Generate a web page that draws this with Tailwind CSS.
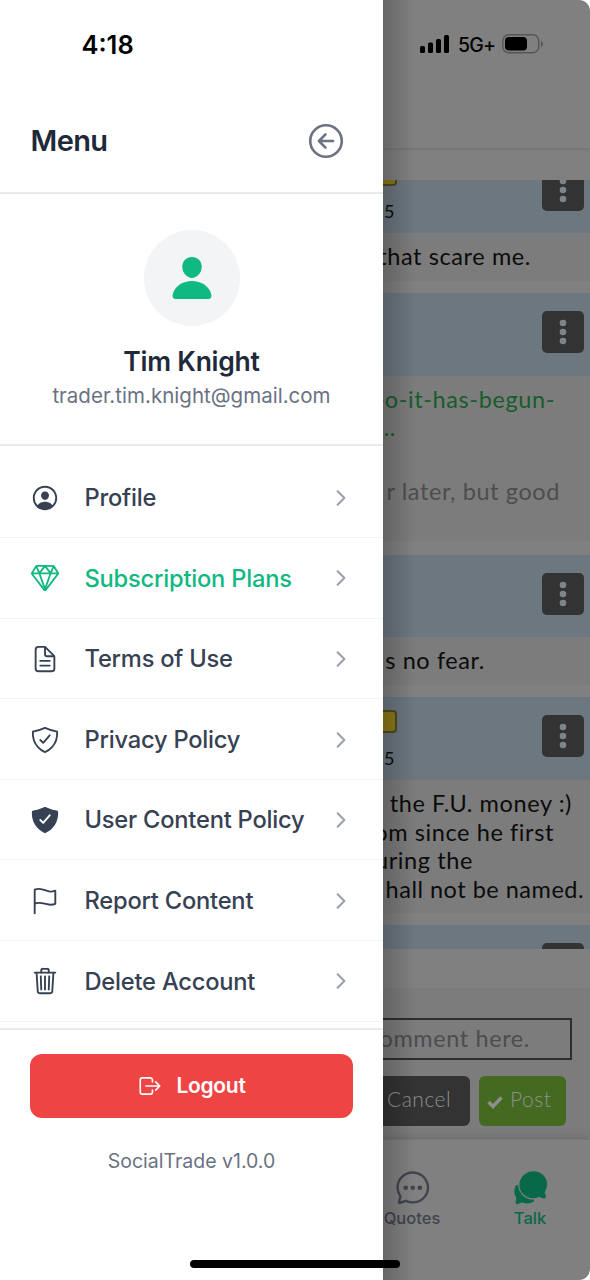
<!DOCTYPE html>
<html lang="en">
<head>
<meta charset="utf-8">
<title>SocialTrade</title>
<script src="https://cdn.jsdelivr.net/npm/@tailwindcss/browser@4"></script>
</head>
<body class="bg-white">
<svg class="hidden">
  <symbol id="chev" viewBox="0 0 512 512"><path d="M184 112l144 144-144 144" fill="none" stroke="currentColor" stroke-width="44" stroke-linecap="round" stroke-linejoin="round"/></symbol>
  <symbol id="dots" viewBox="0 0 42 42"><circle cx="21" cy="12" r="3.3"/><circle cx="21" cy="21" r="3.3"/><circle cx="21" cy="30" r="3.3"/></symbol>
</svg>
<div class="relative flex w-[590px] h-[1280px] overflow-hidden font-['Inter',sans-serif]">

  <!-- Drawer -->
  <aside class="w-[383px] h-full shrink-0 bg-white flex flex-col">
    <div class="h-[88px] pl-[81.5px] pt-[30px] text-[25.5px] leading-[30px] font-semibold text-black tracking-[0px]">4:18</div>
    <div class="h-[106px] border-b-2 border-[#e9eaec] flex items-center justify-between pt-[1.5px] pl-[30.5px] pr-[36px]">
      <h1 class="pt-[1px] text-[29px] leading-[36px] font-semibold text-gray-800 tracking-[-0.6px]">Menu</h1>
      <svg class="size-[42px]" viewBox="0 0 512 512" fill="none" stroke="#6b7280" stroke-width="32" stroke-linecap="round" stroke-linejoin="round"><path d="M249.38 336L170 256l79.38-80M181.03 256H342"/><path d="M448 256c0-106-86-192-192-192S64 150 64 256s86 192 192 192 192-86 192-192z"/></svg>
    </div>
    <div class="h-[252px] border-b-2 border-[#e9eaec] flex flex-col items-center pt-[36px]">
      <div class="size-[96px] rounded-full bg-gray-100 flex items-center justify-center">
        <svg class="size-[48px]" viewBox="0 0 512 512" fill="#10b981"><path d="M332.64 64.58C313.18 43.57 286 32 256 32c-30.16 0-57.43 11.5-76.8 32.38-19.58 21.11-29.12 49.8-26.88 80.78C156.76 206.28 203.27 256 256 256s99.16-49.71 103.67-110.82c2.27-30.7-7.33-59.33-27.03-80.6zM432 480H80a31 31 0 01-24.2-11.13c-6.5-7.77-9.12-18.38-7.18-29.11C57.06 392.94 83.4 353.61 124.8 326c36.78-24.51 83.37-38 131.2-38s94.42 13.5 131.2 38c41.4 27.6 67.74 66.93 76.18 113.75 1.94 10.73-.68 21.34-7.18 29.11A31 31 0 01432 480z"/></svg>
      </div>
      <div class="mt-[19px] text-[26.5px] leading-[32px] font-semibold text-gray-800 tracking-[-0.25px]">Tim Knight</div>
      <div class="mt-[5.5px] text-[20.5px] leading-[26px] text-gray-500 tracking-[0.02px]">trader.tim.knight@gmail.com</div>
    </div>
    <nav class="h-[582px] pt-[11.5px] text-gray-700 text-[23.7px] font-medium tracking-[-0.22px] overflow-hidden">
      <div class="h-[80.6px] border-b-[1.5px] border-gray-100 flex items-center pt-[1px] pl-[30px] pr-[30px]">
        <svg class="size-[30px] mr-[24.5px]" viewBox="0 0 512 512" fill="currentColor"><path d="M258.9 48C141.92 46.42 46.42 141.92 48 258.9c1.56 112.19 92.91 203.54 205.1 205.1 117 1.6 212.48-93.9 210.88-210.88C462.44 140.91 371.09 49.56 258.9 48zm126.42 327.25a4 4 0 01-6.14-.32 124.27 124.27 0 00-32.35-29.59C321.37 329 289.11 320 256 320s-65.37 9-90.83 25.34a124.24 124.24 0 00-32.35 29.58 4 4 0 01-6.14.32A175.32 175.32 0 0180 259c-1.63-97.31 78.22-178.76 175.57-179S432 158.81 432 256a175.32 175.32 0 01-46.68 119.25z"/><path d="M256 144c-19.72 0-37.55 7.39-50.22 20.82s-19 32-17.57 51.93C191.11 256 221.52 288 256 288s64.83-32 67.79-71.24c1.48-19.74-4.8-38.14-17.68-51.82C293.39 151.44 275.59 144 256 144z"/></svg>
        <span class="grow">Profile</span><svg class="size-[24px] text-gray-400"><use href="#chev"/></svg>
      </div>
      <div class="h-[80.6px] border-b-[1.5px] border-gray-100 flex items-center pt-[1px] pl-[30px] pr-[30px]">
        <svg class="size-[30px] mr-[24.5px] text-[#10b981]" viewBox="0 0 512 512" fill="none" stroke="currentColor" stroke-width="32" stroke-linecap="round" stroke-linejoin="round"><path d="M35.42 188.21l207.75 269.46a16.17 16.17 0 0025.66 0l207.75-269.46a16.52 16.52 0 00.95-18.75L407.06 55.71A16.22 16.22 0 00393.27 48H118.73a16.22 16.22 0 00-13.79 7.71L34.47 169.46a16.52 16.52 0 00.95 18.75zM48 176h416"/><path d="M400 64l-48 112-96-128M112 64l48 112 96-128M256 448l-96-272M256 448l96-272"/></svg>
        <span class="grow text-[#10b981]">Subscription Plans</span><svg class="size-[24px] text-gray-400"><use href="#chev"/></svg>
      </div>
      <div class="h-[80.6px] border-b-[1.5px] border-gray-100 flex items-center pt-[1px] pl-[30px] pr-[30px]">
        <svg class="size-[30px] mr-[24.5px]" viewBox="0 0 512 512" fill="none" stroke="currentColor" stroke-width="32" stroke-linecap="round" stroke-linejoin="round"><path d="M416 221.25V416a48 48 0 01-48 48H144a48 48 0 01-48-48V96a48 48 0 0148-48h98.75a32 32 0 0122.62 9.37l141.26 141.26a32 32 0 019.37 22.62z"/><path d="M256 56v120a32 32 0 0032 32h120M176 288h160M176 368h160"/></svg>
        <span class="grow">Terms of Use</span><svg class="size-[24px] text-gray-400"><use href="#chev"/></svg>
      </div>
      <div class="h-[80.6px] border-b-[1.5px] border-gray-100 flex items-center pt-[1px] pl-[30px] pr-[30px]">
        <svg class="size-[30px] mr-[24.5px]" viewBox="0 0 512 512" fill="none" stroke="currentColor" stroke-width="32" stroke-linecap="round" stroke-linejoin="round"><path d="M336 176L225.2 304 176 255.8"/><path d="M463.1 112.37C373.68 96.33 336.71 84.45 256 48c-80.71 36.45-117.68 48.33-207.1 64.37C32.7 369.13 240.58 457.79 256 464c15.42-6.21 223.3-94.87 207.1-351.63z"/></svg>
        <span class="grow">Privacy Policy</span><svg class="size-[24px] text-gray-400"><use href="#chev"/></svg>
      </div>
      <div class="h-[80.6px] border-b-[1.5px] border-gray-100 flex items-center pt-[1px] pl-[30px] pr-[30px]">
        <svg class="size-[30px] mr-[24.5px]" viewBox="0 0 512 512" fill="currentColor"><path d="M479.07 111.35A16 16 0 00465.92 96.6C379.89 81.18 343.69 69.12 266 34.16c-7.76-2.89-12.57-2.84-20 0-77.69 35-113.89 47-199.92 62.44a16 16 0 00-13.15 14.75c-3.85 61.1 4.34 118 24.36 169.15a348.86 348.86 0 0071.43 112.41c44.67 47.43 94.2 75.12 119.74 85.6a20 20 0 0015.11 0c27-10.92 74.69-37.82 119.71-85.62A348.86 348.86 0 00454.71 280.5c20.02-51.14 28.21-108.05 24.36-169.15zm-131 75.11l-110.8 128a16 16 0 01-11.41 5.53h-.66a16 16 0 01-11.2-4.57l-49.2-48.2a16 16 0 1122.4-22.86l37 36.29 99.7-115.13a16 16 0 0124.2 20.94z"/></svg>
        <span class="grow">User Content Policy</span><svg class="size-[24px] text-gray-400"><use href="#chev"/></svg>
      </div>
      <div class="h-[80.6px] border-b-[1.5px] border-gray-100 flex items-center pt-[1px] pl-[30px] pr-[30px]">
        <svg class="size-[30px] mr-[24.5px]" viewBox="0 0 512 512" fill="none" stroke="currentColor" stroke-width="32" stroke-linecap="round" stroke-miterlimit="10"><path d="M80 464V68.14a8 8 0 014-6.9C91.81 56.66 112.92 48 160 48c64 0 145 48 192 48a199.53 199.53 0 0077.23-15.77 2 2 0 012.77 1.85v219.36a4 4 0 01-2.39 3.65C421.37 308.7 392.33 320 352 320c-48 0-128-32-192-32s-80 16-80 16"/></svg>
        <span class="grow">Report Content</span><svg class="size-[24px] text-gray-400"><use href="#chev"/></svg>
      </div>
      <div class="h-[80.6px] border-b-[1.5px] border-gray-100 flex items-center pt-[1px] pl-[30px] pr-[30px]">
        <svg class="size-[30px] mr-[24.5px]" viewBox="0 0 512 512" fill="none" stroke="currentColor" stroke-width="32" stroke-linecap="round" stroke-linejoin="round"><path d="M112 112l20 320c.95 18.49 14.4 32 32 32h184c17.67 0 30.87-13.51 32-32l20-320M80 112h352"/><path d="M192 112V72h0a23.93 23.93 0 0124-24h80a23.93 23.93 0 0124 24h0v40M256 176v224M184 176l8 224M328 176l-8 224"/></svg>
        <span class="grow">Delete Account</span><svg class="size-[24px] text-gray-400"><use href="#chev"/></svg>
      </div>
    </nav>
    <div class="border-t-2 border-[#e9eaec] pt-[24px] px-[30px] grow">
      <div class="h-[64px] rounded-[12px] bg-[#ef4444] text-white flex items-center justify-center gap-[13px]">
        <svg class="size-[26px]" viewBox="0 0 512 512" fill="none" stroke="currentColor" stroke-width="32" stroke-linecap="round" stroke-linejoin="round"><path d="M304 336v40a40 40 0 01-40 40H104a40 40 0 01-40-40V136a40 40 0 0140-40h152c22.09 0 48 17.91 48 40v40M368 336l80-80-80-80M176 256h256"/></svg>
        <span class="text-[21px] font-semibold tracking-[-0.3px]">Logout</span>
      </div>
      <div class="mt-[30px] text-center text-[19.5px] leading-[26px] text-gray-500">SocialTrade v1.0.0</div>
    </div>
  </aside>

  <!-- Dimmed feed -->
  <main class="relative w-[207px] h-full bg-[#808080] rounded-r-[11px] overflow-hidden flex flex-col whitespace-nowrap font-['Lato',sans-serif] text-[23.5px] leading-[28px] text-[#0b0b0b] tracking-[0.6px]">
    <header class="h-[148px] shrink-0 shadow-[0_1px_3px_rgba(0,0,0,0.12)] flex pt-[33px] pl-[37px]">
      <svg class="w-[30px] h-[22px] fill-black" viewBox="0 0 30 22"><rect x="0" y="13" width="5" height="7" rx="1.6"/><rect x="8" y="9.5" width="5" height="10.5" rx="1.6"/><rect x="16" y="6" width="5" height="14" rx="1.6"/><rect x="24" y="2" width="5" height="18" rx="1.6"/></svg>
      <span class="ml-[8px] w-[36px] font-['Inter',sans-serif] text-[19.5px] leading-[25px] font-medium text-black tracking-[-0.8px]">5G+</span>
      <svg class="ml-[8px] w-[42px] h-[22px]" viewBox="0 0 42 22"><rect x=".8" y="1.8" width="36" height="18" rx="6" fill="none" stroke="#555" stroke-width="1.4"/><rect x="3" y="4" width="22" height="13.600" rx="4"/><path d="M39 8q2 .8 2 3t-2 3z" fill="#555"/></svg>
    </header>
    <div class="h-[32px] shrink-0"></div>
    <section class="h-[769px] shrink-0 overflow-hidden flex flex-col">
      <div class="h-[53px] shrink-0 bg-[#6c7780] overflow-hidden flex items-end justify-between pr-[6px]">
        <div class="h-[83px] pt-[13px]"><div class="w-[14px] h-[23px] rounded-r-[4px] bg-[#8c7a16] border-2 border-l-0 border-[#4e4a20]"></div><div class="mt-[14px] pl-[1px] text-[18px] leading-[22px]">5</div></div>
        <svg class="mb-[22px] size-[42px] rounded-[5px] bg-[#333] fill-[#7d858c]"><use href="#dots"/></svg>
      </div>
      <div class="h-[48px] shrink-0 bg-[#7c7c7c] flex items-center justify-end pb-[2px] pr-[59px]">that scare me.</div>
      <div class="h-[12px] shrink-0"></div>
      <div class="h-[83px] shrink-0 bg-[#6c7780] flex items-center justify-end pb-[5px] pr-[6px]"><svg class="size-[42px] rounded-[5px] bg-[#333] fill-[#7d858c]"><use href="#dots"/></svg></div>
      <div class="h-[165px] shrink-0 bg-[#7c7c7c] pt-[9px]">
        <div class="flex justify-end pr-[35px] text-[#175c2c]">eo-it-has-begun-</div>
        <div class="flex justify-end pr-[194px] text-[#175c2c]">..</div>
        <div class="mt-[36px] flex justify-end pr-[30px] text-[#4d4d4d]">r later, but good</div>
      </div>
      <div class="h-[14px] shrink-0"></div>
      <div class="h-[82px] shrink-0 bg-[#6c7780] flex items-center justify-end pb-[5px] pr-[6px]"><svg class="size-[42px] rounded-[5px] bg-[#333] fill-[#7d858c]"><use href="#dots"/></svg></div>
      <div class="h-[48px] shrink-0 bg-[#7c7c7c] flex items-center justify-end pb-[2px] pr-[105px]">s no fear.</div>
      <div class="h-[12px] shrink-0"></div>
      <div class="h-[83px] shrink-0 bg-[#6c7780] flex items-start justify-between pr-[6px]">
        <div class="pt-[13px]"><div class="w-[14px] h-[23px] rounded-r-[4px] bg-[#8c7a16] border-2 border-l-0 border-[#4e4a20]"></div><div class="mt-[14px] pl-[1px] text-[18px] leading-[22px]">5</div></div>
        <svg class="mt-[18px] size-[42px] rounded-[5px] bg-[#333] fill-[#7d858c]"><use href="#dots"/></svg>
      </div>
      <div class="h-[133px] shrink-0 bg-[#7c7c7c] pt-[9px] leading-[28.500px]">
        <div class="flex justify-end pr-[18px]">the F.U. money :)</div>
        <div class="flex justify-end pr-[36px]">om since he first</div>
        <div class="flex justify-end pr-[117px]">uring the</div>
        <div class="flex justify-end pr-[6px] tracking-[0.5px]">hall not be named.</div>
      </div>
      <div class="h-[12px] shrink-0"></div>
      <div class="h-[83px] shrink-0 bg-[#6c7780] flex items-start justify-end pt-[18px] pr-[6px]"><svg class="size-[42px] rounded-[5px] bg-[#333]"><use href="#dots"/></svg></div>
    </section>
    <div class="h-[39px] shrink-0"></div>
    <section class="h-[151px] shrink-0 bg-[#7c7c7c] pt-[30px]">
      <div class="h-[42px] mr-[18px] border-2 border-l-0 border-[#2e2e2e] flex items-center justify-end pb-[2px] pr-[40px] text-[#4d4d4d]">omment here.</div>
      <div class="mt-[16px] flex gap-[9px] text-[21px] leading-[24px] text-[#8f8f8f] tracking-[0.5px]">
        <div class="w-[87px] h-[50px] rounded-r-[6px] bg-[#333] pt-[11px] pl-[4px] font-light">Cancel</div>
        <div class="w-[87px] h-[50px] rounded-[6px] bg-[#446920] pt-[11px] pl-[8px] flex font-light">
          <svg class="mt-[8px] w-[16px] h-[14px]" viewBox="0 0 16 14" fill="none" stroke="#8f8f8f" stroke-width="3.4"><path d="M1.500 7l4.500 4.500L14.500 2.500"/></svg>
          <span class="ml-[7px]">Post</span>
        </div>
      </div>
    </section>
    <footer class="relative grow flex font-['Inter',sans-serif] text-[16.5px] leading-[20px] font-medium tracking-[0px] pt-[29px] border-t border-[#777] shadow-[0_-2px_8px_rgba(0,0,0,0.12)]">
      <div class="w-[58px] flex flex-col items-center text-[#41444f]">
        <svg class="ml-[2px] size-[37.5px] shrink-0" viewBox="0 0 512 512"><path fill="none" stroke="currentColor" stroke-width="32" stroke-linecap="round" stroke-miterlimit="10" d="M87.480 380c1.200-4.380-1.430-10.470-3.940-14.860a42.630 42.630 0 00-2.540-3.800 199.810 199.810 0 01-33-110C47.640 139.090 140.720 48 255.820 48 356.200 48 440 117.540 459.570 209.850a199 199 0 014.430 41.640c0 112.410-89.490 204.930-204.590 204.930-18.310 0-43-4.600-56.470-8.370s-26.920-8.770-30.390-10.110a31.140 31.140 0 00-11.130-2.070 30.700 30.700 0 00-12.080 2.430L81.500 462.780a15.920 15.920 0 01-4.660 1.220 9.610 9.610 0 01-9.580-9.740 15.850 15.850 0 01.6-3.290z"/><g fill="currentColor"><circle cx="160" cy="256" r="32"/><circle cx="256" cy="256" r="32"/><circle cx="352" cy="256" r="32"/></g></svg>
        <span class="mt-[1px]">Quotes</span>
      </div>
      <div class="ml-[59px] w-[60px] flex flex-col items-center text-[#08694a]">
        <svg class="ml-[2px] size-[37.5px] shrink-0" viewBox="0 0 512 512" fill="currentColor"><path d="M439.900 405.600a26.770 26.770 0 01-9.590-2l-56.780-20.130-.42-.17a9.880 9.880 0 00-3.910-.76 10.320 10.320 0 00-3.620.66c-1.380.52-13.810 5.190-26.850 8.770-7.070 1.940-31.680 8.270-51.430 8.270-50.480 0-97.680-19.400-132.890-54.630A183.380 183.380 0 01100.300 215.100a175.900 175.900 0 014.060-37.580c8.790-40.620 32.070-77.570 65.550-104A194.760 194.760 0 01290.300 30c52.210 0 100.860 20 137 56.180 34.160 34.270 52.880 79.330 52.730 126.870a177.860 177.860 0 01-30.300 99.150l-.19.28-.74 1c-.17.23-.34.45-.5.68l-.15.27a21.630 21.630 0 00-1.080 2.090l15.740 55.940a26.420 26.420 0 011.120 7.110 24 24 0 01-24.030 24.030z"/><path d="M299.870 425.390a15.740 15.740 0 00-10.290-8.100c-5.780-1.530-12.520-1.270-17.670-1.650a201.780 201.780 0 01-128.820-58.750A199.210 199.210 0 0186.400 244.160C85 234.420 85 232 85 232a16 16 0 00-28-10.580s-7.880 8.580-11.600 17.190a162.090 162.090 0 0011 150.060C59 393 59 395 58.420 399.500c-2.730 14.110-7.510 39-10 51.910a24 24 0 008 22.920l.46.39A24.340 24.340 0 0072 480a23.420 23.420 0 009-1.790l53.510-20.650a8.050 8.050 0 015.720 0c21.070 7.840 43 12 63.780 12a176 176 0 0074.910-16.660c5.460-2.560 14-5.340 19-11.120a15 15 0 001.950-16.390z"/></svg>
        <span class="mt-[1px]">Talk</span>
      </div>
    </footer>
    <div class="absolute inset-y-0 left-0 w-[32px] bg-linear-to-r from-black/20 to-transparent"></div>
  </main>

  <!-- Home indicator -->
  <div class="absolute left-[190px] top-[1260px] w-[210px] h-[8px] rounded-full bg-black"></div>
</div>
</body>
</html>
